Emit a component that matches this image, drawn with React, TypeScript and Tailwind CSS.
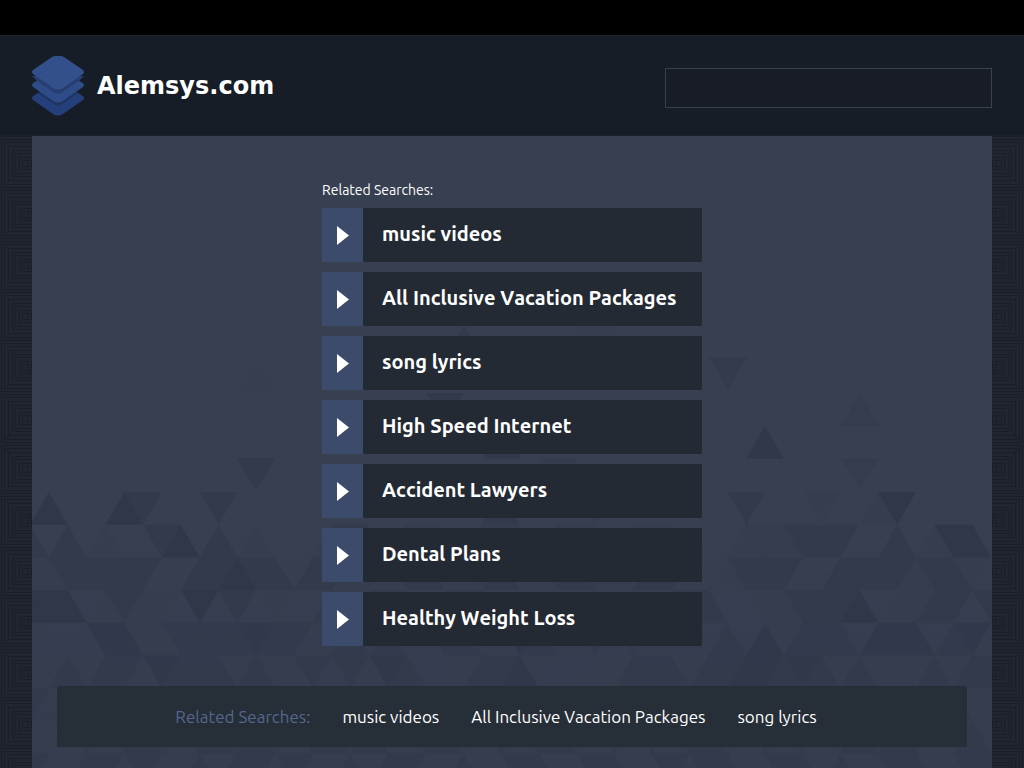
import { useState } from 'react';

const searches = [
  'music videos',
  'All Inclusive Vacation Packages',
  'song lyrics',
  'High Speed Internet',
  'Accident Lawyers',
  'Dental Plans',
  'Healthy Weight Loss',
];

// One character per triangle, the digit is the depth of the shade (0 = none)
const mosaicRows = [
  '0300032000200000000000000200001000000020001001300000',
  '2020100230201000120021002100210021000011122200201330',
  '1122222002232202211022001200221102200122200222212210',
  '3330121103020100210210120021012021022001122230112202',
  '1000331122223220120210220132012021000203122203330231',
  '1121221322212112021320012231001122212233232121112122',
  '2011212121121221121211212212112121121221211221121211',
  '1112122112212112212112211212211212122112121121221121',
  '2112212112122121121221121122112211212211221211221122',
];

const shades = ['none', '#353e4f', '#323b4b', '#2e3748'];

// Loose triangles above the mosaic: [center x, top, points up, shade]
const looseTriangles: [number, number, boolean, string][] = [
  [225, 224, true, '#363f50'],
  [224, 322, false, '#323b4b'],
  [432, 189, true, '#323b4b'],
  [413, 257, false, '#313a4a'],
  [470, 290, true, '#313a4a'],
  [526, 322, false, '#343d4d'],
  [564, 191, false, '#363f50'],
  [696, 221, false, '#333c4c'],
  [733, 290, true, '#2f3949'],
  [828, 257, true, '#343d4d'],
  [828, 322, false, '#343d4d'],
];

const STEP = 18.85;
const ROW = 32.7;

function trianglePoints(cx: number, top: number, up: boolean) {
  const base = up ? top + ROW : top;
  const tip = up ? top : top + ROW;
  return `${cx - STEP},${base} ${cx + STEP},${base} ${cx},${tip}`;
}

function Mosaic() {
  return (
    <svg
      className="absolute inset-0 h-full w-full"
      viewBox="0 0 960 632"
      preserveAspectRatio="xMidYMax slice"
      aria-hidden="true"
    >
      <defs>
        <linearGradient id="depth" x1="0" y1="0" x2="0" y2="1">
          <stop offset="0" stopColor="#333c4e" stopOpacity="0" />
          <stop offset="1" stopColor="#333c4e" stopOpacity="1" />
        </linearGradient>
      </defs>
      <rect x="0" y="388" width="960" height="244" fill="url(#depth)" />
      {looseTriangles.map(([cx, top, up, fill]) => (
        <polygon key={`${cx}-${top}`} points={trianglePoints(cx, top, up)} fill={fill} />
      ))}
      {mosaicRows.map((row, r) =>
        row.split('').map((shade, k) =>
          shade === '0' ? null : (
            <polygon
              key={`${r}-${k}`}
              points={trianglePoints(k * STEP - 2, 356 + r * ROW, (k + r) % 2 === 1)}
              fill={shades[Number(shade)]}
              opacity={r > 3 ? 0.7 : 0.9}
            />
          )
        )
      )}
    </svg>
  );
}

function Gutter({ id, offset }: { id: string; offset: number }) {
  return (
    <div className="relative w-8 shrink-0">
      <svg className="absolute inset-0 h-full w-full" aria-hidden="true">
        <defs>
          <pattern id={id} x={offset} y="2" width="51" height="51" patternUnits="userSpaceOnUse">
            <rect width="51" height="51" fill="#20252f" />
            {[1, 4, 8, 12, 15, 19, 22].map(inset => (
              <rect
                key={inset}
                x={inset + 0.5}
                y={inset + 0.5}
                width={50 - inset * 2}
                height={50 - inset * 2}
                fill="none"
                stroke="#1a1e27"
              />
            ))}
          </pattern>
        </defs>
        <rect width="100%" height="100%" fill={`url(#${id})`} />
      </svg>
    </div>
  );
}

function Logo() {
  return (
    <svg className="h-[60px] w-[52px]" viewBox="0 0 52 60" aria-hidden="true">
      <path d="M1 40 L23 27 Q26 25 29 27 L51 40 Q53 42 51 44 L31 58 Q26 61 21 58 L1 44 Q-1 42 1 40Z" fill="#253f7a" />
      <path d="M6 37 L26 24 L46 37 L29 49 Q26 51 23 49Z" fill="#203461" />
      <path d="M1 27 L23 14 Q26 12 29 14 L51 27 Q53 29 51 31 L31 45 Q26 48 21 45 L1 31 Q-1 29 1 27Z" fill="#2d4c88" />
      <path d="M0 20 L52 20 L47 25 L29 37 Q26 39 23 37 L5 25Z" fill="#263f70" />
      <path d="M1 14 L20 1 Q26 -2 32 1 L51 14 Q53 16 51 18 L31 32 Q26 35 21 32 L1 18 Q-1 16 1 14Z" fill="#34508c" />
    </svg>
  );
}

export default function App() {
  const [query, setQuery] = useState('');

  return (
    <div className="flex min-h-screen flex-col bg-[#1f242e] font-[Ubuntu,'Noto_Sans',sans-serif] text-white [font-kerning:none]">
      <div className="h-[35px] bg-black" />
      <header className="flex items-center justify-between border-y border-[#1c2028] bg-[#171d26] px-8 pt-5 pb-[19px]">
        <a href="#" className="flex items-center gap-[13px]">
          <Logo />
          <h1 className="font-['DejaVu_Sans',sans-serif] text-2xl font-bold">Alemsys.com</h1>
        </a>
        <input
          type="text"
          aria-label="Search"
          value={query}
          onChange={e => setQuery(e.target.value)}
          className="mt-1 h-10 w-[327px] border border-[#3a414d] bg-[#171c27] px-3 text-base outline-none"
        />
      </header>

      <div className="flex flex-1">
        <Gutter id="squares-left" offset={0} />
        <main className="relative flex-1 bg-[#374051]">
          <Mosaic />
          <div className="relative px-[25px] pt-11 pb-5">
            <section className="mx-auto w-full max-w-[380px]">
              <h2 className="mb-2 text-[14px] leading-5">Related Searches:</h2>
              <ul className="flex flex-col gap-[10px]">
                {searches.map(term => (
                  <li key={term}>
                    <a href="#" className="flex h-[54px] bg-[#242a33]">
                      <span className="flex w-[41px] items-center justify-center bg-[#3c4a6c]">
                        <svg className="h-5 w-3" viewBox="0 0 12 20" fill="currentColor" aria-hidden="true">
                          <path d="M0 1 L12 10.5 L0 20Z" />
                        </svg>
                      </span>
                      <span className="flex-1 pt-3 pl-[19px] text-[20px] leading-7 font-bold whitespace-nowrap">
                        {term}
                      </span>
                    </a>
                  </li>
                ))}
              </ul>
            </section>

            <footer className="mt-10 flex h-[61px] items-center justify-center gap-8 bg-[#262e37] pr-8 text-[17px] whitespace-nowrap">
              <span className="text-[#55678c]">Related Searches:</span>
              {searches.slice(0, 3).map(term => (
                <a key={term} href="#">
                  {term}
                </a>
              ))}
            </footer>
          </div>
        </main>
        <Gutter id="squares-right" offset={-19} />
      </div>
    </div>
  );
}
